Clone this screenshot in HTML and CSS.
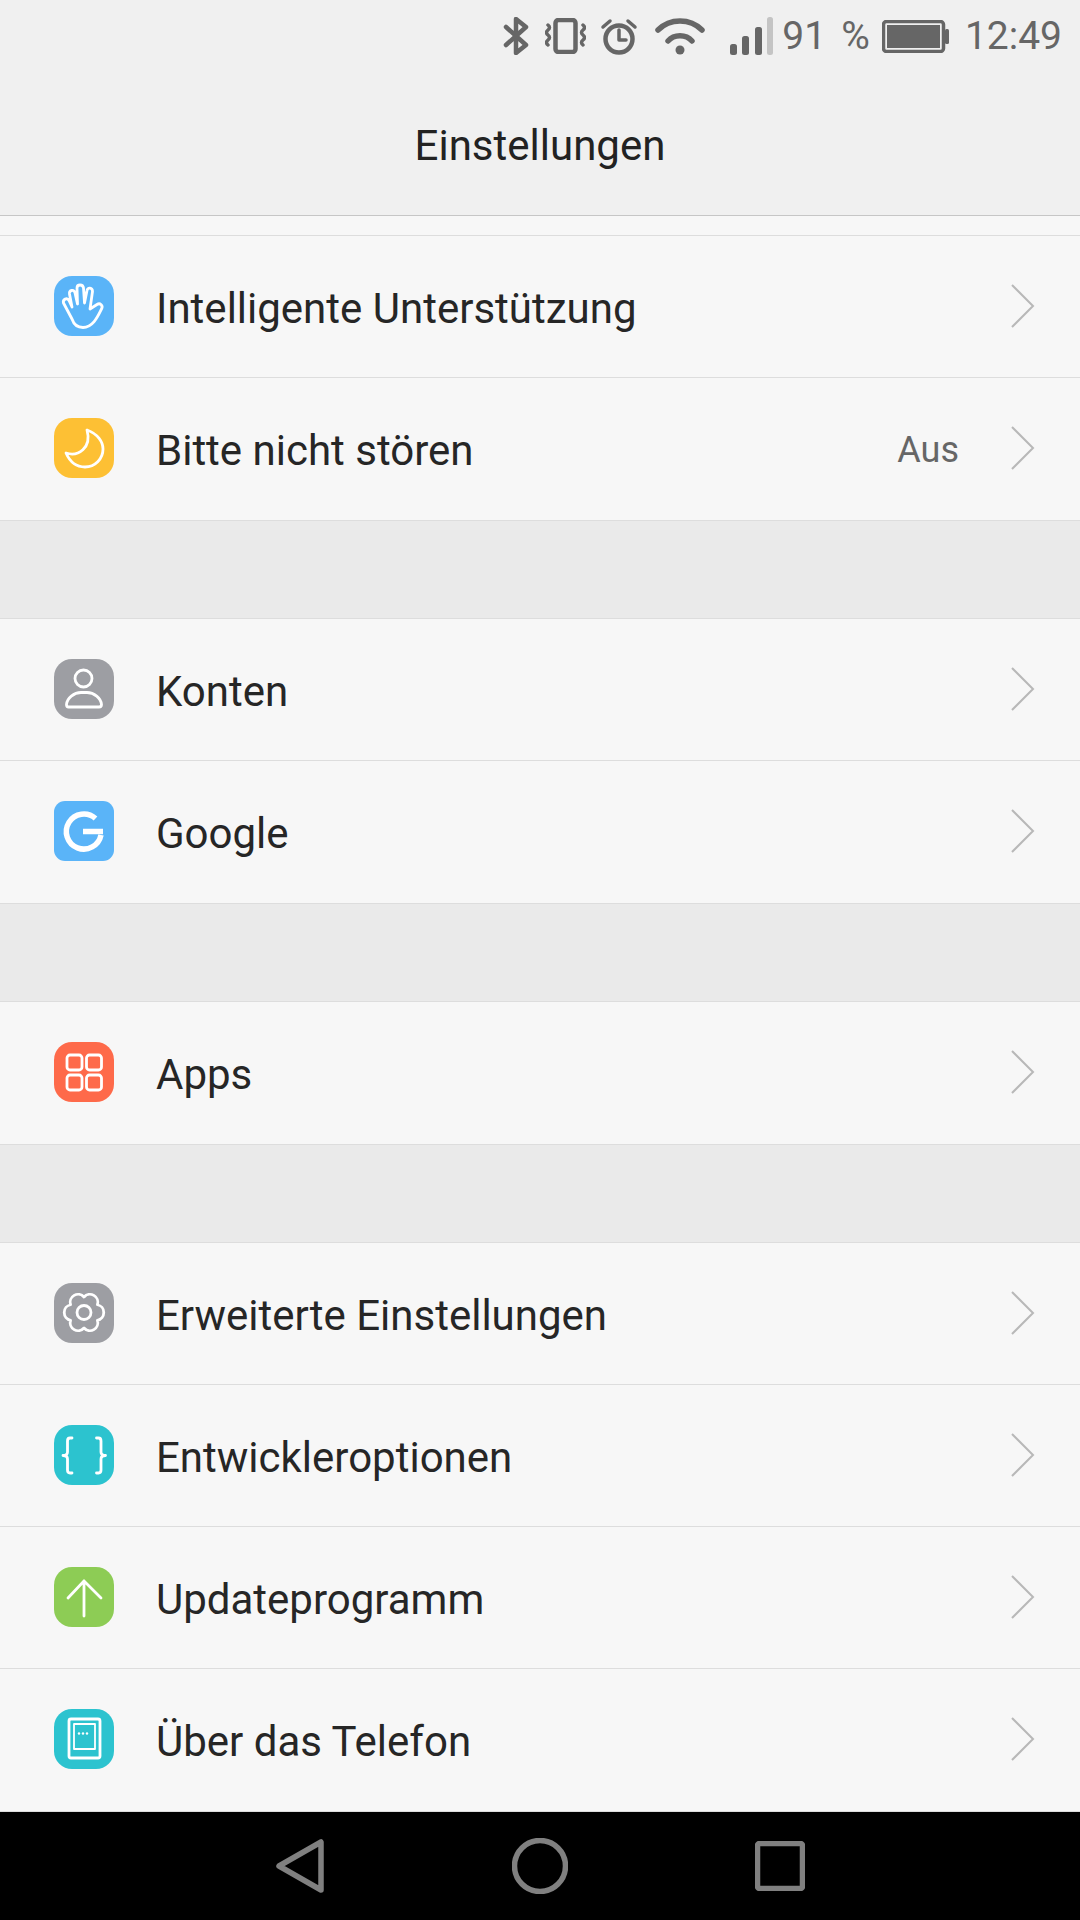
FILE: index.html
```html
<!DOCTYPE html>
<html lang="de">
<head>
    <meta charset="UTF-8">
    <meta name="viewport" content="width=device-width, initial-scale=1.0">
    <title>Einstellungen</title>
    <link rel="stylesheet" href="styles.css">
</head>
<body>

<div class="screen">
    <header class="header">
        <div class="status">
            <svg class="status-icon bt" viewBox="0 0 28 38"><path d="M3 10 L23 28 L13 36 V2 L23 10 L3 28"/></svg>
            <svg class="status-icon vib" viewBox="0 0 41 36"><rect x="10.500" y="2" width="20" height="32" rx="3"/><path class="thin" d="M3 7 q3 2.500 0 5 q-3 2.500 0 5 q3 2.500 0 5 q-3 2.500 0 5 M38 7 q3 2.500 0 5 q-3 2.500 0 5 q3 2.500 0 5 q-3 2.500 0 5"/></svg>
            <svg class="status-icon alarm" viewBox="0 0 38 37"><circle cx="19" cy="21" r="13.500"/><path class="thin" d="M19 12 V22 H26 M3 9 L10 3 M35 9 L28 3"/></svg>
            <svg class="status-icon wifi" viewBox="0 0 50 38"><path d="M3 13 C15 1 35 1 47 13 M13 24 C19 17 31 17 37 24"/><circle class="dot" cx="25" cy="33" r="4.500"/></svg>
            <svg class="status-icon signal" viewBox="0 0 44 38"><rect class="dot" x="0" y="27" width="7" height="11" rx="2.500"/><rect class="dot" x="12" y="19" width="7" height="19" rx="2.500"/><rect class="dot" x="25" y="10" width="7" height="28" rx="2.500"/><rect class="dot off" x="37" y="0" width="6" height="38" rx="2.500"/></svg>
            <span class="status-text percent">91 %</span>
            <svg class="status-icon battery" viewBox="0 0 67 33"><rect class="thin" x="1.500" y="1.500" width="60" height="30" rx="3"/><rect class="dot" x="5" y="5" width="53" height="23"/><rect class="dot" x="63" y="9" width="4" height="15" rx="1.500"/></svg>
            <span class="status-text">12:49</span>
        </div>
        <h1 class="title">Einstellungen</h1>
    </header>

    <div class="strip"></div>

    <section class="group">
        <div class="row">
            <svg class="icon" viewBox="0 0 60 60"><rect class="tile blue" width="60" height="60" rx="18"/><path class="glyph" d="M18 43 L9.500 27 C8.500 23.500 13 21 15 24.500 L18 31 L15.500 18 C15 14 20 13 21 17 L23.500 28 L23 12 C23 8 29 8 29.500 12 L30.500 27 L33 14.500 C33.500 11 38.500 11.500 38.500 15.500 L36 33 L43 28.500 C46 26.500 49.500 29.500 47.500 33 C44 40 39 51.500 29 51.500 C23.500 51.500 20 49 18 43 Z"/></svg>
            <span class="label">Intelligente Unterstützung</span>
            <svg class="chevron" viewBox="0 0 24 44"><path d="M1 1 L22 22 L1 43"/></svg>
        </div>
        <div class="row row-tall">
            <svg class="icon" viewBox="0 0 60 60"><rect class="tile yellow" width="60" height="60" rx="18"/><path class="glyph" d="M33 12 C44 16 49 24 49 31 C49 41 41 49 31 49 C23 49 16 44 12 35 C24 39 38 30 33 12 Z"/></svg>
            <span class="label">Bitte nicht stören</span>
            <span class="value">Aus</span>
            <svg class="chevron" viewBox="0 0 24 44"><path d="M1 1 L22 22 L1 43"/></svg>
        </div>
    </section>

    <div class="gap"></div>

    <section class="group">
        <div class="row">
            <svg class="icon" viewBox="0 0 60 60"><rect class="tile gray" width="60" height="60" rx="18"/><circle class="glyph" cx="29.500" cy="19.500" r="8.500"/><path class="glyph" d="M14.500 48 H45 C47 48 47.500 47 47.500 45.500 C47 39 40 33.500 33 33.500 H27 C20 33.500 13 39 12.500 45.500 C12.500 47 13 48 14.500 48 Z"/></svg>
            <span class="label">Konten</span>
            <svg class="chevron" viewBox="0 0 24 44"><path d="M1 1 L22 22 L1 43"/></svg>
        </div>
        <div class="row row-tall">
            <svg class="icon" viewBox="0 0 60 60"><rect class="tile blue" width="60" height="60" rx="11"/><path class="glyph thick" d="M41.500 17.500 A17.500 17.500 0 1 0 47 34 M29 30.500 H49"/></svg>
            <span class="label">Google</span>
            <svg class="chevron" viewBox="0 0 24 44"><path d="M1 1 L22 22 L1 43"/></svg>
        </div>
    </section>

    <div class="gap"></div>

    <section class="group">
        <div class="row row-tall">
            <svg class="icon" viewBox="0 0 60 60"><rect class="tile orange" width="60" height="60" rx="18"/><rect class="glyph" x="13" y="13" width="15" height="15" rx="3"/><rect class="glyph" x="32.500" y="13" width="15" height="15" rx="3"/><rect class="glyph" x="13" y="33" width="15" height="15" rx="3"/><rect class="glyph" x="32.500" y="33" width="15" height="15" rx="3"/></svg>
            <span class="label">Apps</span>
            <svg class="chevron" viewBox="0 0 24 44"><path d="M1 1 L22 22 L1 43"/></svg>
        </div>
    </section>

    <div class="gap"></div>

    <section class="group">
        <div class="row">
            <svg class="icon" viewBox="0 0 60 60"><rect class="tile gray" width="60" height="60" rx="18"/><path class="glyph" d="M30 14 A7.900 7.900 0 0 1 43.400 21.750 A7.900 7.900 0 0 1 43.400 37.250 A7.900 7.900 0 0 1 30 45 A7.900 7.900 0 0 1 16.600 37.250 A7.900 7.900 0 0 1 16.600 21.750 A7.900 7.900 0 0 1 30 14 Z"/><circle class="glyph" cx="30" cy="29.500" r="7"/></svg>
            <span class="label">Erweiterte Einstellungen</span>
            <svg class="chevron" viewBox="0 0 24 44"><path d="M1 1 L22 22 L1 43"/></svg>
        </div>
        <div class="row">
            <svg class="icon" viewBox="0 0 60 60"><rect class="tile teal" width="60" height="60" rx="18"/><path class="glyph" d="M18 13 H16 C14 13 13.500 14 13.500 16 V27 C13.500 29 12 30.500 9 30.500 C12 30.500 13.500 32 13.500 34 V45 C13.500 47 14 48 16 48 H18 M42.500 13 H44.500 C46.500 13 47 14 47 16 V27 C47 29 48.500 30.500 51.500 30.500 C48.500 30.500 47 32 47 34 V45 C47 47 46.500 48 44.500 48 H42.500"/></svg>
            <span class="label">Entwickleroptionen</span>
            <svg class="chevron" viewBox="0 0 24 44"><path d="M1 1 L22 22 L1 43"/></svg>
        </div>
        <div class="row">
            <svg class="icon" viewBox="0 0 60 60"><rect class="tile green" width="60" height="60" rx="18"/><path class="glyph" d="M30 49 V14 M14 31 L30 14 L47 31"/></svg>
            <span class="label">Updateprogramm</span>
            <svg class="chevron" viewBox="0 0 24 44"><path d="M1 1 L22 22 L1 43"/></svg>
        </div>
        <div class="row row-tall">
            <svg class="icon" viewBox="0 0 60 60"><rect class="tile teal" width="60" height="60" rx="18"/><rect class="glyph" x="15" y="10" width="31" height="39" rx="2"/><rect class="glyph fine" x="20" y="15" width="21" height="25"/><circle class="pip" cx="25" cy="24.500" r="1.200"/><circle class="pip" cx="29" cy="24.500" r="1.200"/><circle class="pip" cx="33" cy="24.500" r="1.200"/></svg>
            <span class="label">Über das Telefon</span>
            <svg class="chevron" viewBox="0 0 24 44"><path d="M1 1 L22 22 L1 43"/></svg>
        </div>
    </section>

    <nav class="navbar">
        <svg class="nav-icon back" viewBox="0 0 48 54"><path d="M45 3 V51 L3 27 Z"/></svg>
        <svg class="nav-icon home" viewBox="0 0 56 56"><circle cx="28" cy="28" r="25.500"/></svg>
        <svg class="nav-icon recent" viewBox="0 0 50 50"><rect x="2.500" y="2.500" width="45" height="45" rx="2"/></svg>
    </nav>
</div>

</body>
</html>
```

FILE: styles.css
```css
* {
    box-sizing: border-box;
}

body {
    margin: 0;
    font-family: 'Roboto', 'Liberation Sans', sans-serif;
    background-color: #f7f7f7;
}

.screen {
    width: 1080px;
    height: 1920px;
    display: flex;
    flex-direction: column;
    overflow: hidden;
}

/* Header + status bar */
.header {
    height: 216px;
    background-color: #f0f0f0;
    border-bottom: 1px solid #c6c6c6;
}

.status {
    height: 72px;
    display: flex;
    align-items: center;
    justify-content: flex-end;
    padding-right: 18px;
    color: #666;
}

.status-icon {
    display: block;
    fill: none;
    stroke: #666;
    stroke-width: 4.5;
    stroke-linecap: round;
    stroke-linejoin: round;
}

.status-icon .thin {
    stroke-width: 3.5;
}

.status-icon .dot {
    fill: #666;
    stroke: none;
}

.status-icon .off {
    fill: #c4c4c4;
}

.bt {
    width: 28px;
    height: 38px;
}

.vib {
    width: 41px;
    height: 36px;
    margin-left: 14px;
}

.alarm {
    width: 38px;
    height: 37px;
    margin-left: 14px;
}

.wifi {
    width: 50px;
    height: 38px;
    margin-left: 17px;
    stroke-width: 5.5;
}

.signal {
    width: 44px;
    height: 38px;
    margin-left: 25px;
}

.battery {
    width: 67px;
    height: 33px;
    margin-left: 12px;
}

.status-text {
    font-size: 39px;
    line-height: 38px;
    margin-left: 16px;
}

.percent {
    margin-left: 8px;
    word-spacing: 5.5px;
}

.title {
    margin: 0;
    padding-top: 51px;
    font-size: 42px;
    line-height: 46px;
    font-weight: 400;
    text-align: center;
    color: #222;
}

.strip {
    height: 19px;
}

/* List */
.group {
    background-color: #f7f7f7;
}

.strip + .group {
    border-top: 1px solid #ddd;
}

.row {
    height: 142px;
    display: flex;
    align-items: center;
    padding: 0 45px 1px 54px;
    border-bottom: 1px solid #ddd;
}

.row-tall {
    height: 143px;
    padding-bottom: 2px;
}

.gap {
    height: 98px;
    background-color: #eaeaea;
    border-bottom: 1px solid #ddd;
}

.icon {
    width: 60px;
    height: 60px;
    flex-shrink: 0;
    display: block;
}

.tile.blue {
    fill: #5ab4f8;
}

.tile.yellow {
    fill: #fdc034;
}

.tile.gray {
    fill: #9d9ea3;
}

.tile.orange {
    fill: #fe6a4a;
}

.tile.teal {
    fill: #2cc3cf;
}

.tile.green {
    fill: #8dcc55;
}

.glyph {
    fill: none;
    stroke: #fff;
    stroke-width: 2.8;
    stroke-linecap: round;
    stroke-linejoin: round;
}

.glyph.thick {
    stroke-width: 5.5;
    stroke-linecap: butt;
}

.glyph.fine {
    stroke-width: 1.8;
}

.pip {
    fill: #fff;
}

.label {
    flex: 1;
    margin-left: 42px;
    padding-top: 5px;
    font-size: 42px;
    color: #262626;
}

.value {
    margin-right: 52px;
    padding-top: 3px;
    font-size: 36px;
    color: #666;
}

.chevron {
    width: 24px;
    height: 44px;
    flex-shrink: 0;
    fill: none;
    stroke: #b8b8b8;
    stroke-width: 2;
}

/* Navigation bar */
.navbar {
    flex: 1;
    background-color: #000;
    display: flex;
    align-items: center;
    padding-left: 276px;
}

.nav-icon {
    display: block;
    fill: none;
    stroke: #808080;
    stroke-width: 5.5;
    stroke-linejoin: round;
}

.back {
    width: 48px;
    height: 54px;
}

.home {
    width: 56px;
    height: 56px;
    margin-left: 188px;
}

.recent {
    width: 50px;
    height: 50px;
    margin-left: 187px;
}
```
